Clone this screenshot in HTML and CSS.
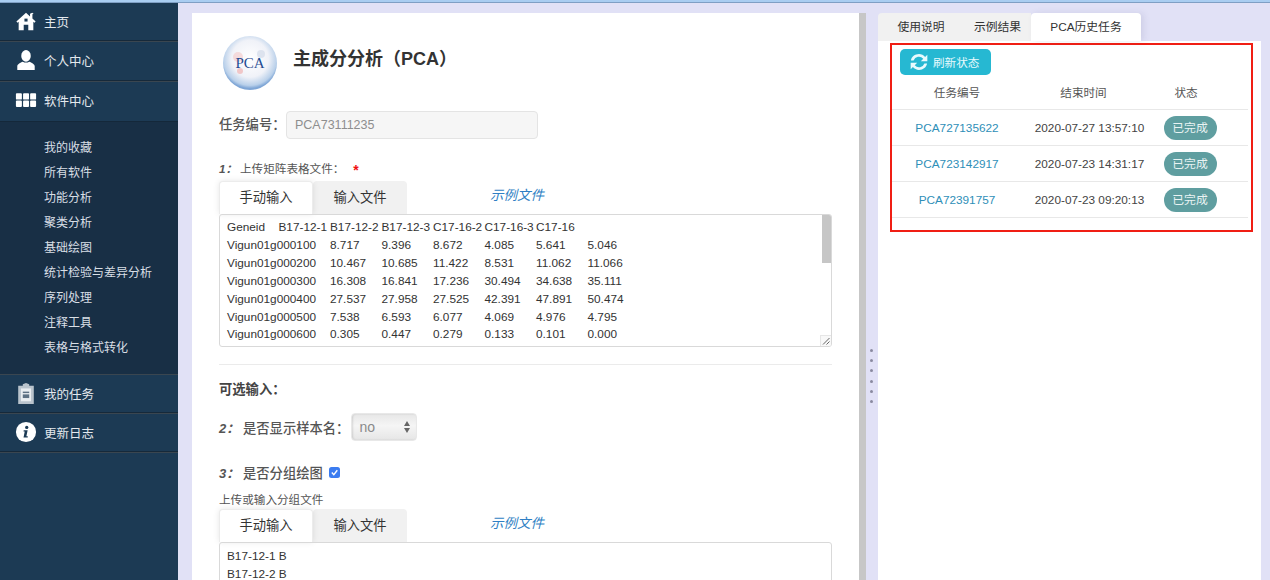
FILE: index.html
```html
<!DOCTYPE html>
<html lang="zh">
<head>
<meta charset="utf-8">
<title>主成分分析（PCA）</title>
<link rel="stylesheet" href="styles.css">
</head>
<body>
<div class="topstrip"></div>
<div class="app">
  <nav class="sidebar">
    <a class="nav-item">
      <svg class="nav-icon" viewBox="0 0 24 24"><path fill="#fff" d="M12 3 1.500 12.500l1.300 1.300L4 12.800V22h5.500v-6h5v6H20v-9.200l1.200 1 1.300-1.300L19 9.300V4.500l1.300-.5-1.500-1-2.400 1V7L12 3z"/><rect x="10.300" y="9.400" width="3.400" height="3.200" fill="#1c3a54"/></svg>
      <span>主页</span>
    </a>
    <a class="nav-item">
      <svg class="nav-icon" viewBox="0 0 24 24"><ellipse cx="12" cy="7.500" rx="5.200" ry="6.300" fill="#fff"/><path fill="#fff" d="M2.500 23v-4.500c0-2 3.500-3.700 6-4.700 2 1.400 5 1.400 7 0 2.500 1 6 2.700 6 4.700V23z"/></svg>
      <span>个人中心</span>
    </a>
    <a class="nav-item nav-open">
      <svg class="nav-icon" viewBox="0 0 24 24"><g fill="#fff"><rect x="1" y="4.500" width="6.500" height="7" rx="1"/><rect x="8.800" y="4.500" width="6.500" height="7" rx="1"/><rect x="16.500" y="4.500" width="6.500" height="7" rx="1"/><rect x="1" y="12.500" width="6.500" height="7" rx="1"/><rect x="8.800" y="12.500" width="6.500" height="7" rx="1"/><rect x="16.500" y="12.500" width="6.500" height="7" rx="1"/></g></svg>
      <span>软件中心</span>
    </a>
    <ul class="submenu">
      <li>我的收藏</li>
      <li>所有软件</li>
      <li>功能分析</li>
      <li>聚类分析</li>
      <li>基础绘图</li>
      <li>统计检验与差异分析</li>
      <li>序列处理</li>
      <li>注释工具</li>
      <li>表格与格式转化</li>
    </ul>
    <a class="nav-item">
      <svg class="nav-icon" viewBox="0 0 24 24"><path fill="#b9c3cc" d="M3.500 4h5V2.500L12 1l3.500 1.500V4h5v20h-17z"/><rect x="6.500" y="7" width="11" height="14" fill="#e9edf0"/><rect x="8.500" y="10.500" width="7" height="1.600" fill="#5d7183"/><rect x="8.500" y="13.500" width="7" height="4" fill="#5d7183"/></svg>
      <span>我的任务</span>
    </a>
    <a class="nav-item">
      <svg class="nav-icon" viewBox="0 0 24 24"><circle cx="12" cy="12" r="11" fill="#fff"/><circle cx="12.800" cy="7" r="1.800" fill="#1c3a54"/><path fill="#1c3a54" d="M9.500 10.200h4.300l-1.400 6.500h1.500v1.300H9.300l1.300-6.600H9.300z"/></svg>
      <span>更新日志</span>
    </a>
  </nav>

  <div class="workspace">
    <main class="panel-main">
      <header class="page-head">
        <svg class="logo" viewBox="0 0 56 56">
          <defs>
            <radialGradient id="orb" cx="50%" cy="42%" r="55%">
              <stop offset="0%" stop-color="#fff"/>
              <stop offset="62%" stop-color="#f0f2f8"/>
              <stop offset="90%" stop-color="#b9d0ea"/>
              <stop offset="100%" stop-color="#7fa6d6"/>
            </radialGradient>
          </defs>
          <circle cx="28" cy="28" r="27" fill="url(#orb)"/>
          <circle cx="16" cy="22" r="5" fill="#f4cfcf" opacity=".7"/>
          <circle cx="18" cy="36" r="3" fill="#efb4b4" opacity=".7"/>
          <circle cx="39" cy="19" r="4" fill="#dde3ee"/>
          <text class="logo-text" x="28" y="33" text-anchor="middle">PCA</text>
        </svg>
        <h1 class="page-title">主成分分析（PCA）</h1>
      </header>

      <div class="task-row">
        <label class="field-label">任务编号：</label>
        <input class="task-input" type="text" value="PCA73111235" disabled>
      </div>

      <div class="step-line step-first"><b class="num-small">1：</b><span>上传矩阵表格文件：</span><span class="req">*</span></div>
      <div class="tabbar">
        <span class="tab tab-active">手动输入</span>
        <span class="tab">输入文件</span>
        <a class="sample-link">示例文件</a>
      </div>
      <div class="textbox textbox-tall">
<pre class="textbox-text">Geneid	B17-12-1	B17-12-2	B17-12-3	C17-16-2	C17-16-3	C17-16
Vigun01g000100	8.717	9.396	8.672	4.085	5.641	5.046
Vigun01g000200	10.467	10.685	11.422	8.531	11.062	11.066
Vigun01g000300	16.308	16.841	17.236	30.494	34.638	35.111
Vigun01g000400	27.537	27.958	27.525	42.391	47.891	50.474
Vigun01g000500	7.538	6.593	6.077	4.069	4.976	4.795
Vigun01g000600	0.305	0.447	0.279	0.133	0.101	0.000</pre>
        <div class="scroll-thumb"></div>
        <div class="resize-grip">
          <svg viewBox="0 0 10 10"><path d="M2 8.500 8.500 2M5.500 8.500l3-3" stroke="#666" stroke-width="1" fill="none"/></svg>
        </div>
      </div>

      <hr class="rule">
      <div class="optional">可选输入：</div>

      <div class="option-row option-select">
        <b class="num">2：</b><span class="option-text">是否显示样本名：</span>
        <div class="fake-select">
          <span>no</span>
          <svg viewBox="0 0 8 14"><path fill="#666" d="M4 1 7 6H1zM4 13 1 8h6z"/></svg>
        </div>
      </div>
      <div class="option-row option-check">
        <b class="num">3：</b><span class="option-text">是否分组绘图</span>
        <svg class="check" viewBox="0 0 11 11"><rect width="11" height="11" rx="2.500" fill="#3b7cf0"/><path d="M2.800 5.600 4.800 7.700 8.300 3.300" stroke="#fff" stroke-width="1.400" fill="none"/></svg>
      </div>
      <div class="upload-label">上传或输入分组文件</div>
      <div class="tabbar">
        <span class="tab tab-active">手动输入</span>
        <span class="tab">输入文件</span>
        <a class="sample-link">示例文件</a>
      </div>
      <div class="textbox textbox-short">
<pre class="textbox-text">B17-12-1 B
B17-12-2 B</pre>
      </div>
    </main>

    <div class="splitter">
      <div class="splitter-bar"></div>
      <div class="splitter-track">
        <i></i><i></i><i></i><i></i><i></i><i></i>
      </div>
    </div>

    <aside class="panel-side">
      <div class="side-tabs">
        <span class="side-tab side-tab-a">使用说明</span>
        <span class="side-tab side-tab-b">示例结果</span>
        <span class="side-tab side-tab-active">PCA历史任务</span>
      </div>
      <div class="side-body">
        <section class="highlight">
          <button class="refresh" type="button">
            <svg viewBox="0 0 24 24"><path fill="#e8fafd" d="M12 2.500c3 0 5.600 1.300 7.300 3.400L22 3.200V11h-7.800l2.900-2.900A6.800 6.800 0 0 0 5.500 10.200H2.300C3 5.800 7 2.500 12 2.500zM2 13h7.800l-2.900 2.900a6.800 6.800 0 0 0 11.600-2.100h3.200C21 18.200 17 21.500 12 21.500c-3 0-5.600-1.300-7.300-3.400L2 20.800z"/></svg>
            <span>刷新状态</span>
          </button>
          <table class="history">
            <thead>
              <tr><th class="c1">任务编号</th><th class="c2">结束时间</th><th class="c3">状态</th></tr>
            </thead>
            <tbody>
              <tr><td><a>PCA727135622</a></td><td class="cell-time">2020-07-27 13:57:10</td><td class="cell-badge"><span class="badge">已完成</span></td></tr>
              <tr><td><a>PCA723142917</a></td><td class="cell-time">2020-07-23 14:31:17</td><td class="cell-badge"><span class="badge">已完成</span></td></tr>
              <tr><td><a>PCA72391757</a></td><td class="cell-time">2020-07-23 09:20:13</td><td class="cell-badge"><span class="badge">已完成</span></td></tr>
            </tbody>
          </table>
        </section>
      </div>
    </aside>
  </div>
</div>
</body>
</html>
```
FILE: styles.css
```css
* { box-sizing: border-box; }
html, body { height: 100%; }
body {
  margin: 0;
  height: 580px;
  overflow: hidden;
  background: #e1e1f6;
  font-family: "Liberation Sans", "Noto Sans CJK SC", sans-serif;
  color: #333;
}
.topstrip {
  height: 3px;
  background: #a9cdf1;
  border-bottom: 1px solid #7f9fc4;
}
.app {
  display: flex;
  height: 577px;
}

/* Sidebar */
.sidebar {
  width: 178px;
  flex: none;
  background: #1c3a54;
  color: #e4e9ee;
  font-size: 12.500px;
}
.nav-item {
  display: flex;
  align-items: center;
  height: 39.300px;
  padding: 0 0 2px 15px;
  border-bottom: 1px solid #3a4650;
  box-shadow: inset 0 -1px 0 #16293a;
}
.nav-open { border-bottom: 0; box-shadow: none; }
.nav-icon {
  width: 22px;
  height: 22px;
  flex: none;
  margin-right: 7px;
}
.submenu {
  list-style: none;
  margin: 0;
  padding: 14px 0 15px 44px;
  height: 254px;
  background: #182f45;
  border-top: 1px solid #14283a;
  border-bottom: 1px solid #3a4650;
  font-size: 12px;
}
.submenu li {
  height: 25px;
  line-height: 25px;
  color: #d9dfe5;
}

/* Workspace */
.workspace {
  flex: 1;
  display: flex;
  padding: 10px 9px 0 14px;
  min-width: 0;
}
.panel-main {
  width: 667px;
  flex: none;
  background: #fff;
  padding: 0 27px;
  overflow: hidden;
}
.page-head {
  display: flex;
  align-items: center;
  height: 98px;
  padding-top: 1px;
}
.logo {
  width: 56px;
  height: 56px;
  margin-left: 3px;
  margin-right: 15px;
  flex: none;
}
.logo-text {
  font-family: "Liberation Serif", serif;
  font-size: 15px;
  fill: #1f4c92;
}
.page-title {
  margin: 0 0 12px;
  font-size: 18px;
  font-weight: 700;
  color: #333;
}
.task-row {
  display: flex;
  align-items: center;
  height: 28px;
}
.field-label {
  width: 67px;
  padding-bottom: 3px;
  font-size: 13.300px;
  font-weight: 500;
  color: #555;
  flex: none;
  white-space: nowrap;
}
.task-input {
  width: 252px;
  height: 28px;
  padding: 0 8px;
  border: 1px solid #e4e4e4;
  border-radius: 4px;
  background: #f6f6f6;
  color: #8e8e8e;
  font: 12.500px "Liberation Sans", sans-serif;
}
.step-line {
  display: flex;
  align-items: center;
  font-size: 11.600px;
  color: #555;
  height: 16px;
}
.step-first { margin-top: 21px; margin-bottom: 5px; }
.num-small { font-style: italic; width: 21px; flex: none; }
.req {
  color: #f01010;
  margin-left: 9px;
  font-weight: 700;
  font-size: 14px;
  line-height: 16px;
  padding-top: 3px;
}
.tabbar {
  display: flex;
  align-items: center;
  height: 33px;
}
.tab {
  width: 94px;
  height: 33px;
  line-height: 33px;
  text-align: center;
  font-size: 13.300px;
  color: #333;
  background: #f1f1f1;
  border-radius: 4px 4px 0 0;
}
.tab-active {
  background: #fff;
  border: 1px solid #ececec;
  border-bottom: 0;
  line-height: 31px;
  box-shadow: 0 0 6px rgba(0, 0, 0, .1);
  position: relative;
}
.sample-link {
  margin-left: 83px;
  margin-bottom: 8px;
  font-size: 13.500px;
  font-style: italic;
  color: #2f7fc4;
}
.textbox {
  position: relative;
  height: 133px;
  border: 1px solid #d9d9d9;
  border-radius: 3px;
  padding: 4px 7px;
  overflow: hidden;
}
.textbox-short { padding-top: 5px; }
.textbox-text {
  margin: 0;
  font: 11.800px/17.900px "Liberation Sans", "Noto Sans CJK SC", sans-serif;
  color: #333;
  tab-size: 51.500px;
}
.scroll-thumb {
  position: absolute;
  right: -1px;
  top: -1px;
  width: 10px;
  height: 49px;
  background: #c6c6c6;
}
.resize-grip {
  position: absolute;
  right: -1px;
  bottom: -1px;
  width: 12px;
  height: 12px;
  background: #f8f8f8;
  border: 1px solid #e6e6e6;
}
.resize-grip svg { display: block; width: 10px; height: 10px; }
.rule {
  margin: 17px 0 0;
  border: 0;
  border-top: 1px solid #ebebeb;
}
.optional {
  margin-top: 16px;
  font-size: 13.300px;
  font-weight: 700;
  color: #444;
  line-height: 17px;
}
.option-row {
  display: flex;
  align-items: center;
  font-size: 13.300px;
  font-weight: 500;
  color: #555;
}
.option-select { margin-top: 15px; height: 28px; }
.option-check { margin-top: 21px; height: 20px; }
.num { font-style: italic; font-size: 13px; width: 24px; flex: none; }
.option-text { margin-right: 2px; }
.fake-select {
  width: 66px;
  height: 28px;
  display: flex;
  align-items: center;
  justify-content: space-between;
  padding: 0 5px 0 7px;
  border: 1px solid #e8e8e8;
  border-radius: 4px;
  background: linear-gradient(#e7e7e7, #f5f5f5 45%, #e6e6e6);
  box-shadow: inset 1px 0 2px rgba(0, 0, 0, .12);
  color: #8a8a8a;
  font-size: 14px;
}
.fake-select svg { width: 8px; height: 14px; }
.check { width: 11px; height: 11px; margin-left: 4px; }
.upload-label {
  margin-top: 10px;
  margin-bottom: 1px;
  font-size: 11.600px;
  line-height: 16px;
  color: #555;
}

/* Splitter */
.splitter {
  width: 19px;
  flex: none;
  display: flex;
}
.splitter-bar { width: 7px; background: #c7c7c7; }
.splitter-track {
  flex: 1;
  display: flex;
  flex-direction: column;
  gap: 7.200px;
  padding: 336px 0 0 4px;
}
.splitter-track i {
  display: block;
  width: 3px;
  height: 3px;
  border-radius: 50%;
  background: #8a8aa0;
}

/* Side panel */
.panel-side {
  width: 383px;
  flex: none;
}
.side-tabs {
  display: flex;
  height: 28px;
}
.side-tab {
  height: 28px;
  line-height: 28px;
  text-align: center;
  font-size: 11.800px;
  color: #333;
  background: #f1f1f1;
}
.side-tab-a { width: 86px; border-radius: 4px 0 0 0; }
.side-tab-b { width: 67px; }
.side-tab-active {
  width: 110px;
  background: #fff;
  border-radius: 4px 4px 0 0;
  box-shadow: 3px 0 6px rgba(80, 80, 130, .12);
}
.side-body {
  background: #fff;
  height: 540px;
  padding: 2px 8px 0 12px;
}
.highlight {
  height: 189px;
  border: 2.500px solid #f01e14;
  padding: 3.500px 3px 0 0;
}
.refresh {
  display: flex;
  align-items: center;
  width: 91px;
  height: 26px;
  margin-left: 8px;
  padding: 0 0 0 9px;
  border: 0;
  border-radius: 5px;
  background: #26b8d2;
  color: #e8fafd;
  font: 11.600px "Liberation Sans", "Noto Sans CJK SC", sans-serif;
}
.refresh svg { width: 20px; height: 20px; margin-right: 4px; flex: none; }
.history {
  width: 356px;
  border-collapse: collapse;
  table-layout: fixed;
  font-size: 11.800px;
}
.history th {
  height: 35px;
  font-size: 11.600px;
  font-weight: 400;
  color: #555;
  border-bottom: 1px solid #e8e8e8;
}
.history td {
  height: 36px;
  text-align: center;
  color: #444;
  border-bottom: 1px solid #e8e8e8;
  padding: 0;
}
.history a { color: #2f8fb8; }
.c1 { width: 130px; }
.c2 { width: 123px; }
.c3 { width: 103px; padding-right: 22px; }
.history .cell-time { padding-left: 12px; }
.history .cell-badge { padding-right: 13px; }
.badge {
  display: inline-block;
  width: 53px;
  height: 24px;
  line-height: 24px;
  border-radius: 12px;
  background: #5f9ea0;
  color: #e9f3f3;
  font-size: 11.800px;
}
```
